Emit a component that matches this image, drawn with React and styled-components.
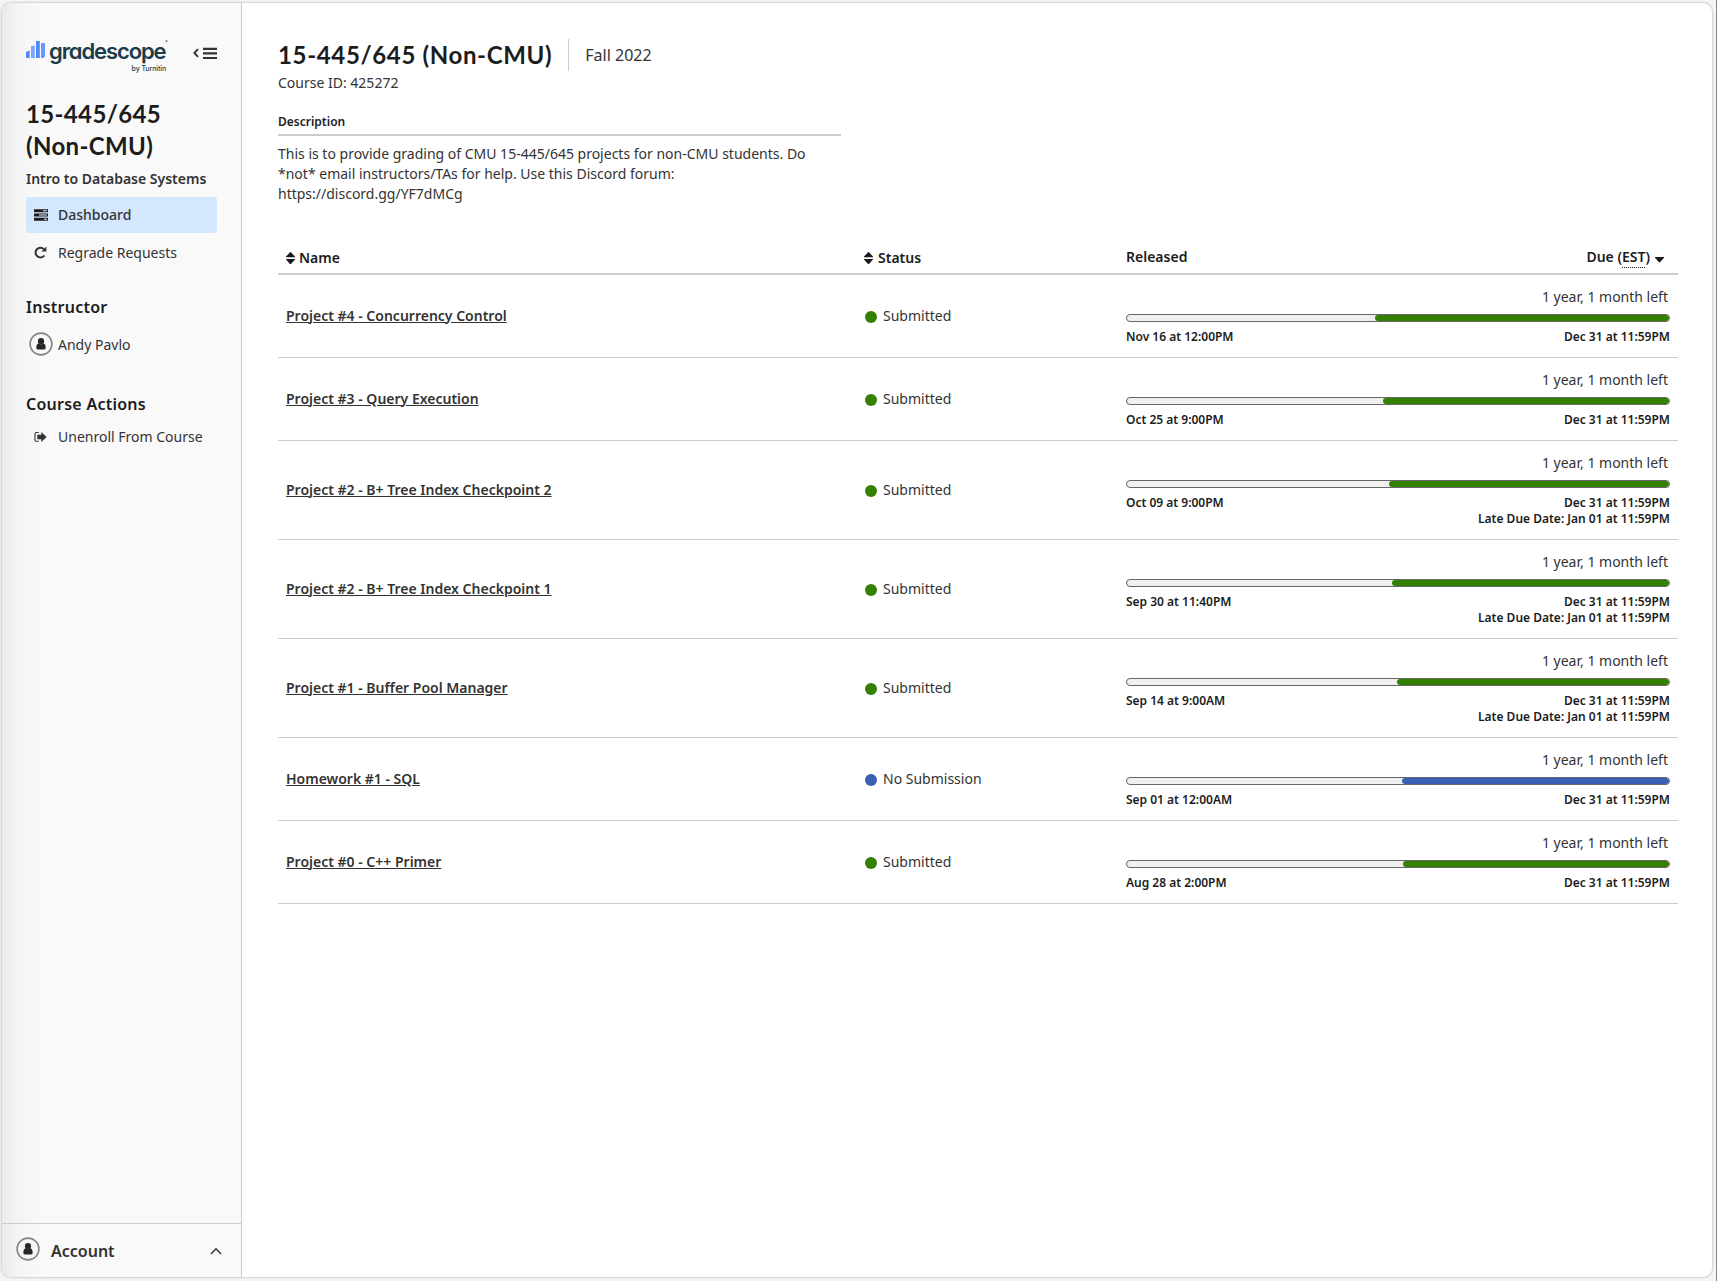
import React from "react";
import styled, { createGlobalStyle } from "styled-components";

const GlobalStyle = createGlobalStyle`
  * { box-sizing: border-box; }
  html, body, #root { margin: 0; height: 100%; }
  body {
    background: #f5f5f5;
    color: #333;
    font-family: "Noto Sans", "Open Sans", sans-serif;
    font-size: 14px;
    overflow: hidden;
  }
  h1, h2, h3, p, ul { margin: 0; padding: 0; }
  ul { list-style: none; }
`;

const Viewport = styled.div`
  width: 1717px;
  height: 1281px;
  padding: 3px 4px 4px 2px;
  border-right: 1px solid #858585;
`;

const Frame = styled.div`
  display: flex;
  height: 1274px;
  border-radius: 9px;
  overflow: hidden;
  background: #fff;
  box-shadow: 0 0 2px 1px rgba(0, 0, 0, 0.16);
`;

const Sidebar = styled.aside`
  display: flex;
  flex-direction: column;
  width: 240px;
  flex: none;
  border-right: 1px solid #ccc;
  background: linear-gradient(to right, #ebebeb 0, #f3f3f3 14px, #f7f7f7 28px, #f9f9f9 46px);
`;

const SidebarTop = styled.div`
  flex: 1;
  padding: 37px 24px 0 24px;
`;

const LogoRow = styled.div`
  display: flex;
  justify-content: space-between;
  height: 34px;
`;

const Logo = styled.div`
  display: flex;
  align-items: flex-start;
  gap: 4px;
`;

const LogoBars = styled.svg`
  display: block;
  width: 19px;
  height: 18px;
`;

const Wordmark = styled.div`
  display: flex;
  flex-direction: column;
  align-items: flex-start;
  width: 120px;
  color: #1b3c4a;
  font-family: Inter, sans-serif;
  font-feature-settings: "cv11";
`;

const WordmarkName = styled.span`
  display: flex;
  font-size: 22px;
  font-weight: 600;
  line-height: 22px;
  letter-spacing: -1.1px;
`;

const Mark = styled.span`
  font-size: 3px;
  line-height: 4px;
  letter-spacing: 0;
`;

const Byline = styled.span`
  align-self: flex-end;
  margin: 2px 3px 0 0;
  font-size: 7px;
  font-weight: 500;
  line-height: 9px;
  letter-spacing: -0.1px;
`;

const CollapseButton = styled.button`
  padding: 0;
  border: 0;
  background: none;
  width: 24px;
  height: 26px;
  svg { display: block; }
`;

const Heading = styled.h1`
  font-family: Lato, sans-serif;
  font-weight: 700;
  font-size: 24px;
  line-height: 32px;
  letter-spacing: ${(p) => p.$tracking || "0.65px"};
  color: #1c1c1c;
  white-space: nowrap;
`;

const SidebarHeading = styled(Heading)`
  margin-top: 24px;
`;

const CourseName = styled.p`
  margin-top: 6px;
  font-weight: 600;
  line-height: 22px;
`;

const Nav = styled.ul`
  margin-top: ${(p) => p.$gap};
  display: flex;
  flex-direction: column;
  gap: 2px;
`;

const NavItem = styled.li`
  display: flex;
  align-items: center;
  height: 36px;
  padding: 0 0 2px 8px;
  border-radius: 3px;
  background: ${(p) => (p.$active ? "#d3e7ff" : "transparent")};
  font-weight: ${(p) => (p.$active ? 500 : 400)};
  white-space: nowrap;
`;

const NavIcon = styled.span`
  display: flex;
  width: 24px;
  padding-top: 1px;
  flex: none;
`;

const SectionTitle = styled.h2`
  margin-top: ${(p) => p.$gap};
  font-size: 16px;
  font-weight: 600;
  line-height: 24px;
  letter-spacing: 0.25px;
  color: #1c1c1c;
`;

const Person = styled.div`
  display: flex;
  align-items: center;
  gap: 5px;
  height: 24px;
  margin-top: 13px;
  padding-left: 3px;
`;

const AccountBar = styled.button`
  display: flex;
  align-items: center;
  height: 54px;
  padding: 0 19px 2px 14px;
  border: 0;
  border-top: 1px solid #ccc;
  background: none;
  font: 600 16px/24px "Noto Sans", sans-serif;
  color: #333;
  text-align: left;
  svg:first-child { margin-top: -2px; }
  svg:last-child { margin-top: 2px; }
`;

const AccountLabel = styled.span`
  flex: 1;
  margin: 3px 0 0 11px;
`;

const Main = styled.main`
  flex: 1;
  padding: 36px 33px 0 36px;
`;

const TitleRow = styled.div`
  display: flex;
  align-items: center;
  height: 32px;
`;

const Term = styled.div`
  display: flex;
  align-items: center;
  height: 32px;
  margin-left: 16px;
  padding-left: 16px;
  border-left: 1px solid #ccc;
  font-size: 16px;
`;

const CourseId = styled.p`
  margin-top: 1px;
  line-height: 22px;
`;

const Description = styled.section`
  width: 563px;
  margin-top: 19px;
`;

const DescriptionTitle = styled.h3`
  padding-bottom: 3px;
  border-bottom: 2px solid #ccc;
  color: #1c1c1c;
  font-size: 12px;
  font-weight: 600;
  line-height: 18px;
`;

const DescriptionText = styled.p`
  margin-top: 8px;
  line-height: 20px;
  white-space: pre-line;
`;

const Table = styled.div`
  margin-top: 37px;
`;

const grid = `
  display: grid;
  grid-template-columns: 586px 262px 1fr;
  align-items: center;
  width: 1400px;
`;

const HeaderRow = styled.div`
  ${grid}
  height: 34px;
  padding-bottom: 2px;
  border-bottom: 2px solid #ccc;
  color: #1c1c1c;
  font-weight: 600;
`;

const SortHeading = styled.div`
  display: flex;
  align-items: center;
  gap: ${(p) => p.$gap};
  padding: 2px 0 0 ${(p) => p.$indent || "0"};
  svg { margin-top: 1px; }
`;

const DateHeading = styled.div`
  display: flex;
  justify-content: space-between;
  padding-right: 14px;
`;

const DueHeading = styled.div`
  display: flex;
  align-items: center;
  svg { margin: 8px 0 0 5px; }
`;

const Zone = styled.span`
  padding-bottom: 1px;
  border-bottom: 1px dotted #1c1c1c;
`;

const Row = styled.div`
  ${grid}
  border-bottom: 1px solid #ccc;
`;

const NameCell = styled.div`
  padding: 0 0 2px 8px;
`;

const AssignmentName = styled.a`
  font-weight: 600;
  text-decoration: underline;
`;

const Status = styled.div`
  display: flex;
  align-items: center;
  gap: 6px;
  padding: 0 0 2px 1px;
  &::before {
    content: "";
    width: 12px;
    height: 12px;
    margin-top: 3px;
    border-radius: 50%;
    background: ${(p) => p.$color};
  }
`;

const Timeline = styled.div`
  padding: 11px 8px 12px 0;
`;

const TimeLeft = styled.div`
  line-height: 22px;
  padding-right: 2px;
  text-align: right;
`;

const Track = styled.div`
  display: flex;
  justify-content: flex-end;
  height: 8px;
  margin: 6px 0 7px;
  border: 1px solid #666;
  border-radius: 4px;
  background: #f0f0f0;
  overflow: hidden;
`;

const Fill = styled.div`
  height: 6px;
  border-radius: 3px;
  background: ${(p) => p.$color};
`;

const Dates = styled.div`
  display: flex;
  justify-content: space-between;
  color: #1c1c1c;
  font-size: 12px;
  font-weight: 600;
  line-height: 16px;
  text-align: right;
`;

const Avatar = () => (
  <svg width="24" height="24" viewBox="0 0 24 24">
    <circle cx="12" cy="12" r="10.9" fill="none" stroke="#858585" strokeWidth="1.6" />
    <circle cx="12" cy="9.2" r="3.1" fill="#262626" />
    <path d="M9.2 11.3 Q12 13.2 14.8 11.3 Q16.7 12.2 16.7 15.4 Q16.7 17.6 14.9 17.6 H9.1 Q7.3 17.6 7.3 15.4 Q7.3 12.2 9.2 11.3Z" fill="#262626" />
  </svg>
);

const SortIcon = () => (
  <svg width="9" height="12" viewBox="0 0 9 12">
    <path d="M0 5.3V4.6L4 .3H5L9 4.6V5.3Z M0 6.9V7.6L4 11.9H5L9 7.6V6.9Z" fill="#1c1c1c" />
  </svg>
);

const TasksIcon = () => (
  <svg width="14" height="12" viewBox="0 0 14 12">
    <path fill="#1c1c1c" d="M0 .3h14v3H0zM0 4.5h14v3H0zM0 8.7h14v3H0z" />
    <path fill="#d3e7ff" d="M9 1.3h4v1H9zM5 5.5h8v1H5zM10 9.7h3v1h-3z" />
  </svg>
);

const RepeatIcon = () => (
  <svg width="13" height="13" viewBox="0 0 13 13">
    <path d="M10.4 9.5A4.9 4.9 0 1 1 10 3.1" fill="none" stroke="#333" strokeWidth="2" />
    <path d="M12.4 .6v5H7.4Z" fill="#333" />
  </svg>
);

const SignOutIcon = () => (
  <svg width="13" height="13" viewBox="0 0 13 13">
    <g transform="translate(0 1)">
      <path d="M4.7 1.5H2.4Q1 1.5 1 2.9V8.9Q1 10.3 2.4 10.3H4.7" fill="none" stroke="#333" strokeWidth="1.1" />
      <path d="M3.3 3.8h4V1L12.6 6l-5.3 5V8.2h-4Z" fill="#333" />
    </g>
  </svg>
);

const green = "#348000";
const blue = "#3b5fb5";

const assignments = [
  { name: "Project #4 - Concurrency Control", released: "Nov 16 at 12:00PM", fill: 294 },
  { name: "Project #3 - Query Execution", released: "Oct 25 at 9:00PM", fill: 286 },
  { name: "Project #2 - B+ Tree Index Checkpoint 2", released: "Oct 09 at 9:00PM", fill: 280, late: true },
  { name: "Project #2 - B+ Tree Index Checkpoint 1", released: "Sep 30 at 11:40PM", fill: 277, late: true },
  { name: "Project #1 - Buffer Pool Manager", released: "Sep 14 at 9:00AM", fill: 272, late: true },
  { name: "Homework #1 - SQL", released: "Sep 01 at 12:00AM", fill: 267, missing: true },
  { name: "Project #0 - C++ Primer", released: "Aug 28 at 2:00PM", fill: 266 },
];

function Assignment({ item }) {
  const color = item.missing ? blue : green;
  return (
    <Row>
      <NameCell><AssignmentName>{item.name}</AssignmentName></NameCell>
      <Status $color={color}>{item.missing ? "No Submission" : "Submitted"}</Status>
      <Timeline>
        <TimeLeft>1 year, 1 month left</TimeLeft>
        <Track><Fill $color={color} style={{ width: item.fill }} /></Track>
        <Dates>
          <span>{item.released}</span>
          <span>
            Dec 31 at 11:59PM
            {item.late && <><br />Late Due Date: Jan 01 at 11:59PM</>}
          </span>
        </Dates>
      </Timeline>
    </Row>
  );
}

export default function App() {
  return (
    <>
      <GlobalStyle />
      <Viewport>
        <Frame>
          <Sidebar>
            <SidebarTop>
              <LogoRow>
                <Logo>
                  <LogoBars viewBox="0 0 19 18">
                    <path fill="#4f87fb" d="M0 12 3.6 10.6V18H1Q0 18 0 17z" />
                    <path fill="#7ba6fd" d="M5 6 8.8 5.6V18H5z" />
                    <path fill="#4f87fb" d="M10 1h3.8v17H10z" />
                    <path fill="#6798fc" d="M15 3h4v13.5L17.2 18H15z" />
                  </LogoBars>
                  <Wordmark>
                    <WordmarkName>gradescope<Mark>®</Mark></WordmarkName>
                    <Byline>by Turnitin</Byline>
                  </Wordmark>
                </Logo>
                <CollapseButton aria-label="Collapse sidebar">
                  <svg width="24" height="26" viewBox="0 0 24 26">
                    <path d="M5 9.2 1.4 13 5 16.8" fill="none" stroke="#333" strokeWidth="1.9" />
                    <path d="M10 8.8h14M10 13.4h14M10 18h14" stroke="#333" strokeWidth="2.2" />
                  </svg>
                </CollapseButton>
              </LogoRow>
              <SidebarHeading $tracking="0.35px">15-445/645<br />(Non-CMU)</SidebarHeading>
              <CourseName>Intro to Database Systems</CourseName>
              <Nav $gap="7px">
                <NavItem $active><NavIcon><TasksIcon /></NavIcon>Dashboard</NavItem>
                <NavItem><NavIcon><RepeatIcon /></NavIcon>Regrade Requests</NavItem>
              </Nav>
              <SectionTitle $gap="24px">Instructor</SectionTitle>
              <Person><Avatar />Andy Pavlo</Person>
              <SectionTitle $gap="36px">Course Actions</SectionTitle>
              <Nav $gap="3px">
                <NavItem><NavIcon><SignOutIcon /></NavIcon>Unenroll From Course</NavItem>
              </Nav>
            </SidebarTop>
            <AccountBar>
              <Avatar />
              <AccountLabel>Account</AccountLabel>
              <svg width="12" height="8" viewBox="0 0 12 8">
                <path d="M1 7 6 1.8 11 7" fill="none" stroke="#333" strokeWidth="1.5" />
              </svg>
            </AccountBar>
          </Sidebar>
          <Main>
            <TitleRow>
              <Heading as="h2">15-445/645 (Non-CMU)</Heading>
              <Term>Fall 2022</Term>
            </TitleRow>
            <CourseId>Course ID: 425272</CourseId>
            <Description>
              <DescriptionTitle>Description</DescriptionTitle>
              <DescriptionText>
                {"This is to provide grading of CMU 15-445/645 projects for non-CMU students. Do\n*not* email instructors/TAs for help. Use this Discord forum:\nhttps://discord.gg/YF7dMCg"}
              </DescriptionText>
            </Description>
            <Table>
              <HeaderRow>
                <SortHeading $indent="8px" $gap="4px"><SortIcon />Name</SortHeading>
                <SortHeading $gap="5px"><SortIcon />Status</SortHeading>
                <DateHeading>
                  <span>Released</span>
                  <DueHeading>
                    <span>Due (<Zone>EST</Zone>)</span>
                    <svg width="9" height="6" viewBox="0 0 9 6"><path d="M0 0h9V.7L5 5.2H4L0 .7Z" fill="#1c1c1c" /></svg>
                  </DueHeading>
                </DateHeading>
              </HeaderRow>
              {assignments.map((item) => <Assignment key={item.name} item={item} />)}
            </Table>
          </Main>
        </Frame>
      </Viewport>
    </>
  );
}
